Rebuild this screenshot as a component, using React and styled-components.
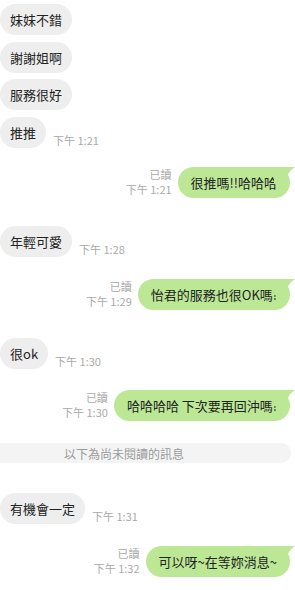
import React from 'react';
import styled, { createGlobalStyle } from 'styled-components';

const GlobalStyle = createGlobalStyle`
  html, body {
    margin: 0;
    padding: 0;
    background: #ffffff;
  }
  body {
    font-family: "Noto Sans CJK TC", "Noto Sans", sans-serif;
    -webkit-font-smoothing: antialiased;
  }
`;

const Chat = styled.div`
  width: 295px;
  height: 590px;
  overflow: hidden;
  padding-top: 4px;
  box-sizing: border-box;
`;

const Row = styled.div`
  display: flex;
  align-items: flex-end;
  justify-content: ${p => (p.$mine ? 'flex-end' : 'flex-start')};
  margin-top: ${p => p.$top}px;
  padding-right: ${p => (p.$mine ? 5 : 0)}px;
  &:first-child {
    margin-top: 0;
  }
`;

const Bubble = styled.div`
  position: relative;
  height: 31px;
  line-height: 31px;
  padding: 0 ${p => (p.$mine ? 13 : 10)}px;
  border-radius: 16px;
  background: ${p => (p.$mine ? '#bce896' : '#eeeeee')};
  color: #222;
  font-size: 13px;
  white-space: nowrap;
`;

const Tail = styled.svg`
  position: absolute;
  top: 0;
  right: -5px;
  width: 21px;
  height: 16px;
`;

const Time = styled.span`
  font-size: 11px;
  color: #aaaaaa;
  margin-left: 7px;
  padding-bottom: 1px;
  line-height: 14px;
  white-space: nowrap;
`;

const Meta = styled.div`
  display: flex;
  flex-direction: column;
  align-items: flex-end;
  margin-right: 6px;
  padding-bottom: 1px;
  font-size: 11px;
  line-height: 15px;
  color: #aaaaaa;
  white-space: nowrap;
`;

const Divider = styled.div`
  display: flex;
  align-items: center;
  justify-content: center;
  width: 291px;
  height: 20px;
  margin-top: ${p => p.$top}px;
  padding-right: 43px;
  box-sizing: border-box;
  background: #f4f4f4;
  border-radius: 0 10px 10px 0;
  font-size: 12px;
  color: #9a9a9a;
`;

const messages = [
  { text: '妹妹不錯', top: 0 },
  { text: '謝謝姐啊', top: 7 },
  { text: '服務很好', top: 6 },
  { text: '推推', time: '下午 1:21', top: 7 },
  { text: '很推嗎!!哈哈哈', time: '下午 1:21', mine: true, top: 19 },
  { text: '年輕可愛', time: '下午 1:28', top: 28 },
  { text: '怡君的服務也很OK嗎!', time: '下午 1:29', mine: true, top: 22 },
  { text: '很ok', time: '下午 1:30', top: 28 },
  { text: '哈哈哈哈 下次要再回沖嗎!', time: '下午 1:30', mine: true, top: 21 },
  { divider: '以下為尚未閱讀的訊息', top: 22 },
  { text: '有機會一定', time: '下午 1:31', top: 30 },
  { text: '可以呀~在等妳消息~', time: '下午 1:32', mine: true, top: 22 },
];

function Message({ m }) {
  if (m.mine) {
    return (
      <Row $mine $top={m.top}>
        <Meta>
          <span>已讀</span>
          <span>{m.time}</span>
        </Meta>
        <Bubble $mine>
          <Tail viewBox="0 0 21 16">
            <path d="M0 0 H21 Q16 3 14 8 L12 16 H0 Z" fill="#bce896" />
          </Tail>
          {m.text}
        </Bubble>
      </Row>
    );
  }
  return (
    <Row $top={m.top}>
      <Bubble>{m.text}</Bubble>
      {m.time && <Time>{m.time}</Time>}
    </Row>
  );
}

export default function App() {
  return (
    <>
      <GlobalStyle />
      <Chat>
        {messages.map((m, i) =>
          m.divider ? (
            <Divider key={i} $top={m.top}>{m.divider}</Divider>
          ) : (
            <Message key={i} m={m} />
          )
        )}
      </Chat>
    </>
  );
}
